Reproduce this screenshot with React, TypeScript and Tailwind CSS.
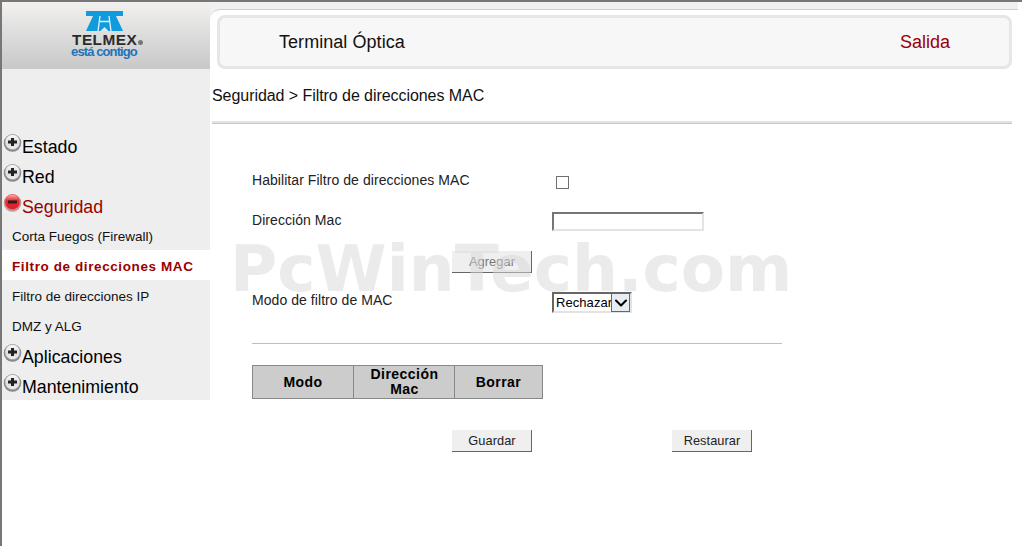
import { ChevronDown } from "lucide-react";

const FONT = "font-['Liberation_Sans',Arial,sans-serif]";

function ToggleIcon({ open }: { open?: boolean }) {
  const id = open ? "toggleRed" : "toggleGray";
  return (
    <svg width="19" height="19" viewBox="0 0 19 19" className="shrink-0">
      <defs>
        <linearGradient id={id} x1="0" y1="0" x2="0" y2="1">
          {open ? (
            <>
              <stop offset="0" stopColor="#f9b4b6" />
              <stop offset="0.4" stopColor="#ee2a33" />
              <stop offset="1" stopColor="#d81e26" />
            </>
          ) : (
            <>
              <stop offset="0" stopColor="#fafafa" />
              <stop offset="0.6" stopColor="#dedee2" />
              <stop offset="1" stopColor="#f2f2f4" />
            </>
          )}
        </linearGradient>
      </defs>
      <circle cx="9.5" cy="10" r="8.8" fill={open ? "#b9a0a0" : "#8a8a8a"} />
      <circle cx="9.5" cy="9" r="7.6" fill={`url(#${id})`} stroke={open ? "#e8666c" : "#a4a4a8"} strokeWidth="0.8" />
      {open ? (
        <rect x="5" y="7.5" width="9" height="3" fill="#222" />
      ) : (
        <path d="M8 5h3v2.5h3v3h-3V13H8v-2.5H5v-3h3z" fill="#222" />
      )}
    </svg>
  );
}

function MenuHead({ label, open }: { label: string; open?: boolean }) {
  return (
    <div className={`h-[30px] flex items-center pl-px text-[17.8px] ${open ? "text-[#990000]" : "text-black"}`}>
      <span className="-mt-[5px]">
        <ToggleIcon open={open} />
      </span>
      <span className="mt-[5px]">{label}</span>
    </div>
  );
}

function SubItem({ label, active }: { label: string; active?: boolean }) {
  return (
    <div
      className={`h-[30px] flex items-center pl-[10px] pt-[4px] text-[13.5px] ${
        active ? "bg-white font-bold text-[#990000] tracking-[0.6px]" : "text-[#111]"
      }`}
    >
      {label}
    </div>
  );
}

function FlatButton({ label, muted }: { label: string; muted?: boolean }) {
  return (
    <button
      className={`w-[80px] h-[22px] pl-px bg-[#efefef] border-r border-b border-[#666] text-[12.8px] ${
        muted ? "text-[#777]" : "text-[#222]"
      }`}
    >
      {label}
    </button>
  );
}

function Logo() {
  return (
    <div className="h-[67px] bg-gradient-to-b from-[#f2f1f0] to-[#c8c8c8] flex flex-col items-center">
      <svg width="37" height="21" viewBox="0 0 37 21" className="mt-[9px] -ml-[3px]">
        <rect x="0" y="0" width="37" height="5" fill="#0f9bdc" />
        <path d="M7 5h23l7 15H0z" fill="#0f9bdc" />
        <path d="M14 5l-2 15M23 5l2 15M14 10.5h9" stroke="#e8f4fa" strokeWidth="1.3" fill="none" />
        <path d="M14.5 20l4-4 4 4z" fill="#dfe8ee" />
      </svg>
      <div className="relative flex items-start leading-none mt-[2px] -ml-[2px]">
        <span className="text-[14px] font-black text-[#2b2b2b] tracking-[0.4px] leading-[13px] scale-x-110">TELMEX</span>
        <span className="absolute -right-[8px] top-[6px] w-[5px] h-[5px] rounded-full bg-[#777]" />
      </div>
      <div className="text-[13px] font-bold text-[#1e73b9] leading-[11px] -ml-[4px] -mt-px tracking-[-0.9px]">
        está contigo
      </div>
    </div>
  );
}

export default function App() {
  return (
    <div className={`${FONT} relative w-[1022px] h-[546px] overflow-hidden bg-white border-l-2 border-t-2 border-[#777] flex`}>
      {/* Sidebar */}
      <div className="w-[208px] shrink-0">
        <Logo />
        <div className="bg-[#eeeeee] pt-[61px]">
          <MenuHead label="Estado" />
          <MenuHead label="Red" />
          <MenuHead label="Seguridad" open />
          <SubItem label="Corta Fuegos (Firewall)" />
          <SubItem label="Filtro de direcciones MAC" active />
          <SubItem label="Filtro de direcciones IP" />
          <SubItem label="DMZ y ALG" />
          <MenuHead label="Aplicaciones" />
          <MenuHead label="Mantenimiento" />
        </div>
      </div>

      {/* Main */}
      <div className="w-[808px] shrink-0 h-full bg-[#f0f0f0]">
        <div className="mt-[7px] h-[537px] bg-white rounded-tl-[10px] border-t border-[#d0d0d0] pl-[2px]">
          <div className="ml-[5px] mt-[5px] w-[795px] h-[54px] bg-[#f7f7f7] border-[3px] border-[#e6e6e6] rounded-[8px] flex items-center justify-between pl-[59px] pr-[59px] text-[18px]">
            <span className="text-[#111] tracking-[0.05px] mt-px">Terminal Óptica</span>
            <span className="text-[#990000] mt-px">Salida</span>
          </div>

          <div className="h-[52px] pt-[1px] flex items-center text-[16px] tracking-[-0.06px] text-[#111]">
            Seguridad &gt; Filtro de direcciones MAC
          </div>
          <div className="w-[800px] h-[3px] bg-[#e2e2e2] border-b border-[#c8c8c8]" />

          <div className="pl-[40px] text-[14px] tracking-[0.06px] text-[#222]">
            <div className="mt-[46px] h-[20px] flex items-center">
              <span className="w-[304px]">Habilitar Filtro de direcciones MAC</span>
              <input type="checkbox" className="appearance-none w-[13px] h-[13px] bg-white border border-[#707070] mt-[4px]" />
            </div>

            <div className="mt-[20px] h-[20px] flex items-center">
              <span className="w-[300px]">Dirección Mac</span>
              <input className="w-[152px] h-[19px] mt-[3px] border-2 border-t-[#767676] border-l-[#767676] border-r-[#e3e3e3] border-b-[#e3e3e3] bg-white" />
            </div>

            <div className="mt-[21px] ml-[200px] flex">
              <FlatButton label="Agregar" muted />
            </div>

            <div className="mt-[19px] flex items-start">
              <span className="w-[300px] -mt-[2px]">Modo de filtro de MAC</span>
              <div className="w-[80px] h-[21px] flex items-center bg-white border-2 border-t-[#666] border-l-[#666] border-r-[#e3e3e3] border-b-[#e3e3e3] text-[13px] text-black">
                <span className="w-[58px] pl-[2px] overflow-hidden whitespace-nowrap">Rechazar</span>
                <span className="w-[19px] h-[19px] bg-[#e8edf2] border border-[#666] flex items-center justify-center">
                  <ChevronDown size={20} strokeWidth={2.5} className="shrink-0" />
                </span>
              </div>
            </div>

            <div className="mt-[30px] w-[530px] h-px bg-[#bdbdc9]" />

            <div className="mt-[21px] w-[291px] h-[34px] grid grid-cols-[101px_101px_87px] bg-[#cccccc] border border-[#888] text-[14px] font-bold text-black tracking-[0.45px] text-center leading-[15px]">
              <div className="flex items-center justify-center border-r border-[#888]">Modo</div>
              <div className="flex items-center justify-center border-r border-[#888] pl-px">
                Dirección
                <br />
                Mac
              </div>
              <div className="flex items-center justify-center">Borrar</div>
            </div>

            <div className="mt-[31px] ml-[200px] flex gap-[140px]">
              <FlatButton label="Guardar" />
              <FlatButton label="Restaurar" />
            </div>
          </div>
        </div>
      </div>

      {/* Watermark */}
      <div className="absolute left-[228px] top-[232px] pointer-events-none font-['DejaVu_Sans',sans-serif] font-bold text-[64.5px] leading-[70px] text-[#d8d8d8] opacity-50 whitespace-nowrap">
        PcWinTech.com
      </div>
    </div>
  );
}
